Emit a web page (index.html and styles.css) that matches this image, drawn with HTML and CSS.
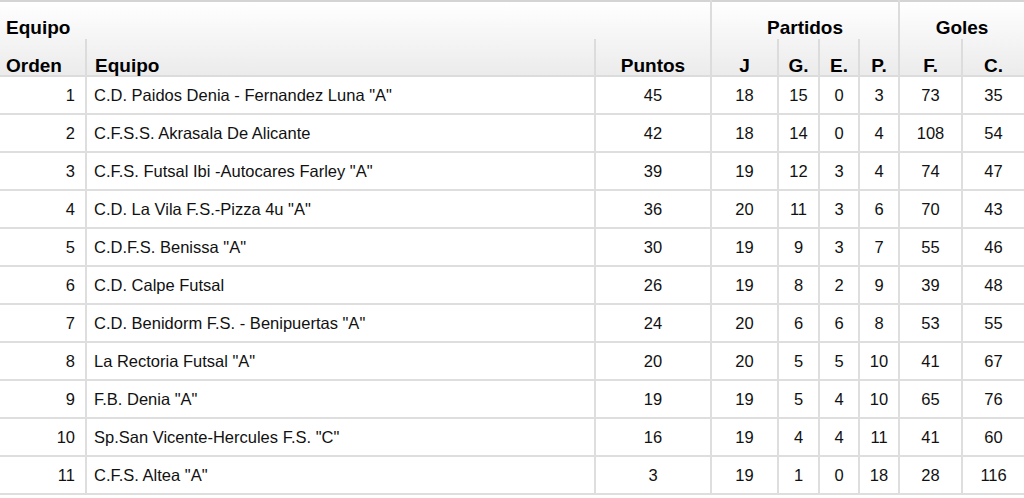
FILE: index.html
```html
<!DOCTYPE html>
<html lang="es">
<head>
<meta charset="utf-8">
<title>Clasificación</title>
<link rel="stylesheet" href="styles.css">
</head>
<body>
<table class="standings">
  <colgroup>
    <col class="c-orden"><col class="c-equipo"><col class="c-puntos">
    <col class="c-j"><col class="c-g"><col class="c-e"><col class="c-p">
    <col class="c-f"><col class="c-c">
  </colgroup>
  <thead>
    <tr class="group-row">
      <th colspan="3" class="left group">Equipo</th>
      <th colspan="4" class="group">Partidos</th>
      <th colspan="2" class="group">Goles</th>
    </tr>
    <tr class="sub-row">
      <th class="left">Orden</th>
      <th class="left eq">Equipo</th>
      <th>Puntos</th>
      <th class="grp-start">J</th>
      <th>G.</th>
      <th>E.</th>
      <th>P.</th>
      <th class="grp-start">F.</th>
      <th>C.</th>
    </tr>
  </thead>
  <tbody>
    <tr><td class="ord">1</td><td class="eq">C.D. Paidos Denia - Fernandez Luna "A"</td><td>45</td><td>18</td><td>15</td><td>0</td><td>3</td><td>73</td><td>35</td></tr>
    <tr><td class="ord">2</td><td class="eq">C.F.S.S. Akrasala De Alicante</td><td>42</td><td>18</td><td>14</td><td>0</td><td>4</td><td>108</td><td>54</td></tr>
    <tr><td class="ord">3</td><td class="eq">C.F.S. Futsal Ibi -Autocares Farley "A"</td><td>39</td><td>19</td><td>12</td><td>3</td><td>4</td><td>74</td><td>47</td></tr>
    <tr><td class="ord">4</td><td class="eq">C.D. La Vila F.S.-Pizza 4u "A"</td><td>36</td><td>20</td><td>11</td><td>3</td><td>6</td><td>70</td><td>43</td></tr>
    <tr><td class="ord">5</td><td class="eq">C.D.F.S. Benissa "A"</td><td>30</td><td>19</td><td>9</td><td>3</td><td>7</td><td>55</td><td>46</td></tr>
    <tr><td class="ord">6</td><td class="eq">C.D. Calpe Futsal</td><td>26</td><td>19</td><td>8</td><td>2</td><td>9</td><td>39</td><td>48</td></tr>
    <tr><td class="ord">7</td><td class="eq">C.D. Benidorm F.S. - Benipuertas "A"</td><td>24</td><td>20</td><td>6</td><td>6</td><td>8</td><td>53</td><td>55</td></tr>
    <tr><td class="ord">8</td><td class="eq">La Rectoria Futsal "A"</td><td>20</td><td>20</td><td>5</td><td>5</td><td>10</td><td>41</td><td>67</td></tr>
    <tr><td class="ord">9</td><td class="eq">F.B. Denia "A"</td><td>19</td><td>19</td><td>5</td><td>4</td><td>10</td><td>65</td><td>76</td></tr>
    <tr><td class="ord">10</td><td class="eq">Sp.San Vicente-Hercules F.S. "C"</td><td>16</td><td>19</td><td>4</td><td>4</td><td>11</td><td>41</td><td>60</td></tr>
    <tr><td class="ord">11</td><td class="eq">C.F.S. Altea "A"</td><td>3</td><td>19</td><td>1</td><td>0</td><td>18</td><td>28</td><td>116</td></tr>
  </tbody>
</table>
</body>
</html>
```
FILE: styles.css
```css
html, body {
  margin: 0;
  padding: 0;
  background: #fff;
}

.standings {
  width: 1024px;
  table-layout: fixed;
  border-collapse: collapse;
  font-family: "Liberation Sans", Arial, sans-serif;
  font-size: 16.5px;
  color: #111;
  border-top: 2px solid #d4d4d4;
}

.c-orden { width: 86px; }
.c-equipo { width: 509px; }
.c-puntos { width: 116px; }
.c-j { width: 67px; }
.c-g { width: 41px; }
.c-e { width: 40px; }
.c-p { width: 40px; }
.c-f { width: 63px; }
.c-c { width: 62px; }

.standings thead {
  background: linear-gradient(#ffffff, #ebebeb);
}

.standings th {
  font-size: 19px;
  line-height: 19px;
  font-weight: bold;
  color: #000;
  text-align: center;
  vertical-align: bottom;
  padding: 0;
  border-left: 2px solid #dcdcdc;
  white-space: nowrap;
}

.standings th:first-child {
  border-left: none;
}

.group-row th {
  height: 35px;
  padding-bottom: 2px;
}

.sub-row th {
  height: 36px;
  padding-bottom: 0;
  border-bottom: 2px solid #dcdcdc;
}

.standings th.left {
  text-align: left;
  padding-left: 6px;
}

.standings th.eq {
  padding-left: 8px;
}

.standings td {
  height: 36px;
  padding: 0;
  text-align: center;
  vertical-align: middle;
  border-left: 2px solid #dedede;
  border-bottom: 2px solid #dedede;
  white-space: nowrap;
}

.standings td:first-child {
  border-left: none;
}

.standings td.ord {
  text-align: right;
  padding-right: 10px;
}

.standings td.eq {
  text-align: left;
  padding-left: 7px;
}
```
